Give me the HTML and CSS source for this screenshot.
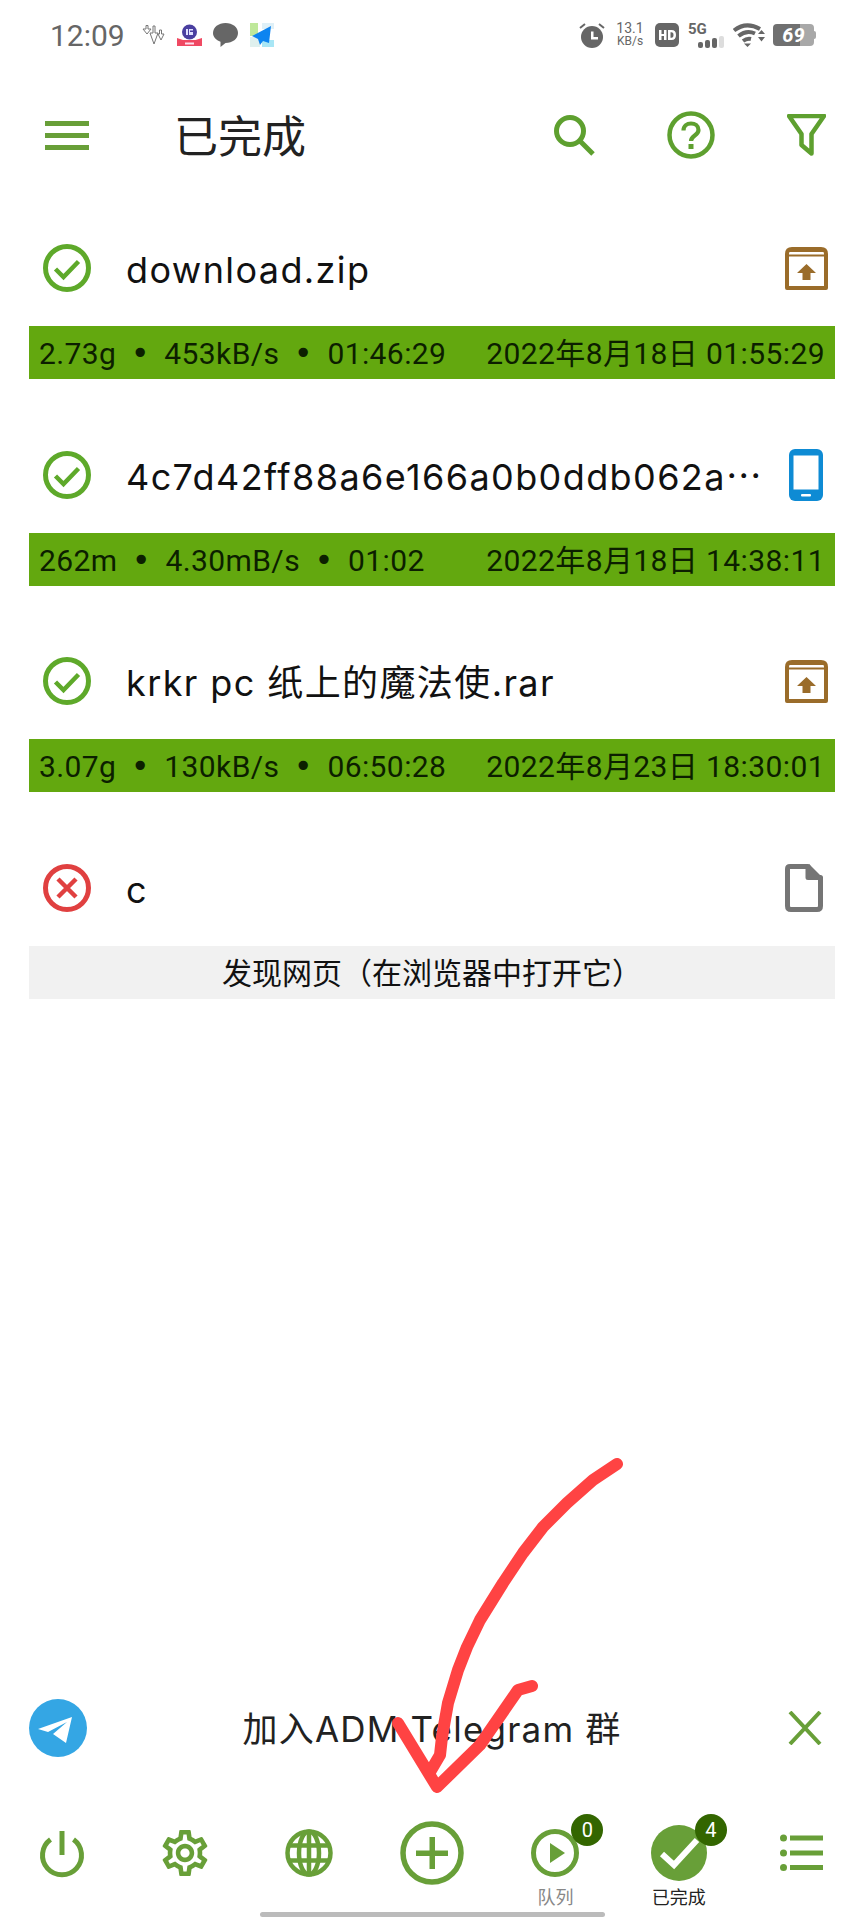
FILE: index.html
```html
<!DOCTYPE html>
<html lang="zh">
<head>
<meta charset="utf-8">
<title>已完成</title>
<link rel="stylesheet" href="styles.css">
</head>
<body>
<svg class="defs" width="0" height="0" aria-hidden="true">
  <defs>
    <symbol id="ok" viewBox="0 0 48 48">
      <circle cx="24" cy="24" r="21.5" fill="none" stroke="#5ea92a" stroke-width="5"/>
      <path d="M12.5 25l8 8 15-15.5" fill="none" stroke="#5ea92a" stroke-width="4.5"/>
    </symbol>
    <symbol id="fail" viewBox="0 0 48 48">
      <circle cx="24" cy="24" r="21.5" fill="none" stroke="#e04040" stroke-width="5"/>
      <path d="M15 15l18 18M33 15L15 33" fill="none" stroke="#e04040" stroke-width="4.5"/>
    </symbol>
    <symbol id="archive" viewBox="0 0 43 43">
      <path d="M7 2h29q5 0 5 5v34H2V7Q2 2 7 2z" fill="none" stroke="#9a6c2a" stroke-width="4" stroke-linejoin="round"/>
      <path d="M2 2h39v3H2zM2 7.500h39v2H2z" fill="#9a6c2a"/>
      <path d="M21.500 17l9.500 9h-5.500v7h-8v-7H12z" fill="#9a6c2a"/>
    </symbol>
    <symbol id="phone" viewBox="0 0 34 52">
      <rect width="34" height="52" rx="6" fill="#0e8bd4"/>
      <rect x="4.500" y="6.500" width="25" height="34" fill="#fff"/>
      <rect x="12" y="45" width="10" height="2.500" rx="1" fill="#fff"/>
    </symbol>
    <symbol id="file" viewBox="0 0 38 48">
      <path d="M5 2.500h18v11h12.500V42q0 3.500-3.500 3.500H6Q2.500 45.500 2.500 42V5Q2.500 2.500 5 2.500z" fill="none" stroke="#757575" stroke-width="5" stroke-linejoin="round"/>
      <path d="M24 0l14 14H24z" fill="#757575"/>
    </symbol>
  </defs>
</svg>

<div class="page">
  <div class="status">
    <span class="time">12:09</span>
    <svg class="st st-arrows" viewBox="0 0 23 20" aria-hidden="true"><path d="M1 4h3V0.500h2V4h3L5 9zM8 8h3V1h2v7h3l-4 11zM16 9h1.500V5h2v4H22l-3 6z" fill="#fff" stroke="#777" stroke-width="1"/></svg>
    <svg class="st st-app" viewBox="0 0 25 22" aria-hidden="true"><path d="M0 14l12 4 13-4v8H0z" fill="#f04a63"/><rect x="2" y="16" width="21" height="6" rx="1" fill="#ef4761"/><circle cx="12.500" cy="8" r="7.500" fill="#4a3fa0"/><rect x="8" y="18.500" width="9" height="2" fill="#fde"/><path d="M9 5h2v6H9zM12 5h4v1.500h-3V8h3v3h-4z" fill="#dfe0ff"/></svg>
    <svg class="st st-chat" viewBox="0 0 25 24" aria-hidden="true"><path d="M12.500 0C19.500 0 25 4.300 25 10s-5.500 10-12.500 10l-5 4 0-5.200C3 17 0 13.800 0 10 0 4.300 5.500 0 12.500 0z" fill="#666"/></svg>
    <svg class="st st-plane" viewBox="0 0 24 24" aria-hidden="true"><rect width="8" height="13" fill="#bfe89a"/><rect x="12" y="0" width="12" height="6" fill="#dff0f7"/><rect y="14" width="10" height="10" fill="#dff0ee"/><rect x="12" y="17" width="12" height="7" fill="#a8e6f5"/><path d="M21 3L2 13l6 3 2 6 3-4 6 2z" fill="#0d84f0"/></svg>
    <span class="status-gap"></span>
    <svg class="st st-alarm" viewBox="0 0 26 25" aria-hidden="true"><circle cx="13" cy="14" r="11" fill="#666"/><path d="M12 8.500h2.500V14H19v2.500h-7z" fill="#fff"/><path d="M1 5l5-4M25 5l-5-4" stroke="#666" stroke-width="2"/></svg>
    <span class="speed"><span>13.1</span><span class="speed-unit">KB/s</span></span>
    <svg class="st st-hd" viewBox="0 0 24 24" aria-hidden="true"><rect width="24" height="24" rx="5" fill="#666"/><path d="M4 7h2.500v4H9V7h2.500v10H9v-4H6.500v4H4zM13 7h3.500q4.500 0 4.500 5t-4.500 5H13zm2.500 2.200v5.600h1q2 0 2-2.800t-2-2.800z" fill="#fff"/></svg>
    <span class="net">
      <span class="net-label">5G</span>
      <span class="net-bars"><i class="bar-a"></i><i class="bar-b"></i><i class="bar-c"></i><i class="bar-d"></i></span>
    </span>
    <svg class="st st-wifi" viewBox="0 0 32 24" aria-hidden="true"><path d="M1 7.500Q13-2 27 6" fill="none" stroke="#666" stroke-width="4"/><path d="M5.500 13q8-6.500 16.500-2.500" fill="none" stroke="#666" stroke-width="4"/><path d="M10 18q4-3 8-2" fill="none" stroke="#666" stroke-width="4"/><path d="M11 20.500h7l-3.500 3.500zM25 11l3.500-4 3.500 4zM25 14h7l-3.500 4.500z" fill="#666"/></svg>
    <span class="battery"><span class="battery-fill">69</span><span class="battery-tip"></span></span>
  </div>

  <header class="toolbar">
    <div class="menu"><i></i><i></i><i></i></div>
    <h1 class="title">已完成</h1>
    <span class="toolbar-gap"></span>
    <svg class="tb tb-search" viewBox="0 0 41 41" aria-hidden="true"><circle cx="16" cy="16" r="13.500" fill="none" stroke="#5ea02f" stroke-width="5"/><path d="M26 26l13 13" stroke="#5ea02f" stroke-width="5"/></svg>
    <svg class="tb tb-help" viewBox="0 0 48 48" aria-hidden="true"><circle cx="24" cy="24" r="21.500" fill="none" stroke="#5ea02f" stroke-width="4.500"/><path d="M16.500 19.500c0-4.500 3.500-7 7.500-7s7.500 2.500 7.500 6.500c0 5.500-7.500 5.500-7.500 11" fill="none" stroke="#5ea02f" stroke-width="4.200"/><rect x="21.500" y="33" width="5" height="5" fill="#5ea02f"/></svg>
    <svg class="tb tb-filter" viewBox="0 0 39 42" aria-hidden="true"><path d="M2 2h35L24.500 20v19.500L14.500 31V20z" fill="none" stroke="#5ea02f" stroke-width="4.500" stroke-linejoin="round"/></svg>
  </header>

  <main class="list">
    <article class="item">
      <div class="row">
        <svg class="state"><use href="#ok"/></svg>
        <div class="name">download.zip</div>
        <svg class="kind kind-archive"><use href="#archive"/></svg>
      </div>
      <div class="bar"><span class="stats">2.73g <b class="dot">•</b> 453kB/s <b class="dot">•</b> 01:46:29</span><span class="when">2022年8月18日 01:55:29</span></div>
    </article>
    <article class="item">
      <div class="row">
        <svg class="state"><use href="#ok"/></svg>
        <div class="name">4c7d42ff88a6e166a0b0ddb062a⋯</div>
        <svg class="kind kind-phone"><use href="#phone"/></svg>
      </div>
      <div class="bar"><span class="stats">262m <b class="dot">•</b> 4.30mB/s <b class="dot">•</b> 01:02</span><span class="when">2022年8月18日 14:38:11</span></div>
    </article>
    <article class="item">
      <div class="row">
        <svg class="state"><use href="#ok"/></svg>
        <div class="name">krkr pc 纸上的魔法使.rar</div>
        <svg class="kind kind-archive"><use href="#archive"/></svg>
      </div>
      <div class="bar"><span class="stats">3.07g <b class="dot">•</b> 130kB/s <b class="dot">•</b> 06:50:28</span><span class="when">2022年8月23日 18:30:01</span></div>
    </article>
    <article class="item">
      <div class="row">
        <svg class="state"><use href="#fail"/></svg>
        <div class="name">c</div>
        <svg class="kind kind-file"><use href="#file"/></svg>
      </div>
      <div class="bar bar-info">发现网页（在浏览器中打开它）</div>
    </article>
  </main>

  <div class="bottom">
    <div class="promo">
      <svg class="tg" viewBox="0 0 58 58" aria-hidden="true"><circle cx="29" cy="29" r="29" fill="#34a6e4"/><path d="M9 30L43 18L37 44L24 35L38 23L19 33z" fill="#fff"/></svg>
      <span class="promo-text">加入ADM Telegram 群</span>
      <svg class="close" viewBox="0 0 34 34" aria-hidden="true"><path d="M2 1l30 32M32 1L2 33" stroke="#689f38" stroke-width="4"/></svg>
    </div>
    <nav class="nav">
      <div class="nav-item">
        <div class="nav-icon"><svg viewBox="0 0 64 64" aria-hidden="true"><path d="M20.500 18.500a19.500 19.500 0 1 0 23 0" fill="none" stroke="#689f38" stroke-width="5"/><path d="M32 10v24" stroke="#689f38" stroke-width="5"/></svg></div>
      </div>
      <div class="nav-item">
        <div class="nav-icon"><svg viewBox="-1.900 -1.900 27.800 27.800" aria-hidden="true"><path fill="#689f38" d="M19.430 12.980c.04-.32.07-.64.07-.98 0-.34-.03-.66-.07-.98l2.110-1.650c.19-.15.24-.42.12-.64l-2-3.460c-.09-.16-.26-.25-.44-.25-.06 0-.12.01-.17.03l-2.490 1c-.52-.4-1.080-.73-1.690-.98l-.38-2.650C14.460 2.180 14.250 2 14 2h-4c-.25 0-.46.18-.49.42l-.38 2.650c-.61.25-1.170.59-1.690.98l-2.490-1c-.06-.02-.12-.03-.18-.03-.17 0-.34.09-.43.25l-2 3.460c-.13.22-.07.49.12.64l2.110 1.650c-.04.32-.07.65-.07.98 0 .33.03.66.07.98l-2.110 1.650c-.19.15-.24.42-.12.64l2 3.460c.09.16.26.25.44.25.06 0 .12-.01.17-.03l2.490-1c.52.4 1.080.73 1.690.98l.38 2.650c.03.24.24.42.49.42h4c.25 0 .46-.18.49-.42l.38-2.650c.61-.25 1.170-.59 1.690-.98l2.490 1c.06.02.12.03.18.03.17 0 .34-.09.43-.25l2-3.460c.12-.22.07-.49-.12-.64l-2.110-1.650zm-1.980-1.710c.04.31.05.52.05.73 0 .21-.02.43-.05.73l-.14 1.130.89.7 1.080.84-.7 1.210-1.270-.51-1.040-.42-.9.68c-.43.32-.84.56-1.250.73l-1.060.43-.16 1.130-.2 1.350h-1.400l-.19-1.350-.16-1.130-1.060-.43c-.43-.18-.83-.41-1.230-.71l-.91-.7-1.060.43-1.270.51-.7-1.210 1.080-.84.89-.7-.14-1.130c-.03-.31-.05-.54-.05-.74s.02-.43.05-.73l.14-1.130-.89-.7-1.080-.84.7-1.210 1.270.51 1.040.42.9-.68c.43-.32.84-.56 1.250-.73l1.060-.43.16-1.130.2-1.350h1.390l.19 1.350.16 1.130 1.060.43c.43.18.83.41 1.230.71l.91.7 1.060-.43 1.270-.51.7 1.210-1.070.85-.89.7.14 1.130zM12 8c-2.210 0-4 1.790-4 4s1.790 4 4 4 4-1.790 4-4-1.790-4-4-4zm0 6c-1.100 0-2-.9-2-2s.9-2 2-2 2 .9 2 2-.9 2-2 2z"/></svg></div>
      </div>
      <div class="nav-item">
        <div class="nav-icon"><svg viewBox="0 0 64 64" aria-hidden="true"><g fill="none" stroke="#689f38" stroke-width="4.500"><circle cx="32" cy="32" r="21.500"/><ellipse cx="32" cy="32" rx="10" ry="21.500"/><path d="M11 24.500h42M11 39.500h42M32 10v44"/></g></svg></div>
      </div>
      <div class="nav-item">
        <div class="nav-icon"><svg viewBox="0 0 64 64" aria-hidden="true"><circle cx="32" cy="32" r="29" fill="none" stroke="#689f38" stroke-width="5.500"/><path d="M16 29.500h32v5.500H16zM29.500 16h5.500v32h-5.500z" fill="#689f38"/></svg></div>
      </div>
      <div class="nav-item">
        <div class="nav-icon"><svg viewBox="0 0 64 64" aria-hidden="true"><circle cx="32" cy="32" r="21.500" fill="none" stroke="#689f38" stroke-width="5"/><path d="M27 22l15 10-15 10z" fill="#689f38"/></svg><span class="badge">0</span></div>
        <span class="nav-label">队列</span>
      </div>
      <div class="nav-item">
        <div class="nav-icon"><svg viewBox="0 0 64 64" aria-hidden="true"><circle cx="32" cy="32" r="28" fill="#689f38"/><path d="M15 33l12 11 23-25" fill="none" stroke="#fff" stroke-width="6"/></svg><span class="badge">4</span></div>
        <span class="nav-label nav-label-active">已完成</span>
      </div>
      <div class="nav-item">
        <div class="nav-icon"><svg viewBox="0 0 64 64" aria-hidden="true"><g fill="#689f38"><circle cx="13.500" cy="17" r="3.500"/><circle cx="13.500" cy="32" r="3.500"/><circle cx="13.500" cy="46.500" r="3.500"/><path d="M20 14.500h33v5H20zM20 29.500h33v5H20zM20 44h33v5H20z"/></g></svg></div>
      </div>
    </nav>
    <div class="home"></div>
  </div>

  <svg class="scribble" viewBox="0 0 864 1920" aria-hidden="true">
    <path d="M617 1464L593 1480L567 1503L543 1527L523 1553L503 1583L480 1620L467 1647L458 1670L448 1703L442 1737L440 1755L430 1772M398 1723L437 1787L480 1745L518 1690L532 1686" fill="none" stroke="#ff4343" stroke-width="12" stroke-linecap="round" stroke-linejoin="round"/>
  </svg>
</div>
</body>
</html>
```
FILE: styles.css
```css
* { box-sizing: border-box; }
html, body { margin: 0; padding: 0; background: #fff; }
body { font-family: Roboto, "Noto Sans CJK SC", sans-serif; color: #111; }
.defs { position: absolute; }
.page { position: relative; width: 864px; height: 1920px; display: flex; flex-direction: column; overflow: hidden; }

.status { height: 70px; display: flex; align-items: center; padding: 0 48px 0 50px; color: #666; }
.time { font-size: 30px; width: 92px; }
.st { display: block; flex: none; }
.st-arrows { width: 23px; height: 20px; }
.st-app { width: 25px; height: 22px; margin-left: 12px; }
.st-chat { width: 25px; height: 24px; margin-left: 11px; }
.st-plane { width: 24px; height: 24px; margin-left: 12px; }
.status-gap { flex: 1; }
.st-alarm { width: 26px; height: 25px; }
.speed { display: flex; flex-direction: column; width: 28px; margin-left: 11px; font-size: 14px; line-height: 13px; align-items: center; white-space: nowrap; }
.speed-unit { font-size: 12px; }
.st-hd { width: 24px; height: 24px; margin-left: 11px; }
.net { position: relative; width: 36px; height: 25px; margin-left: 9px; flex: none; }
.net-label { position: absolute; left: 0; top: -3px; font-size: 15px; font-weight: 700; line-height: 18px; color: #666; }
.net-bars { position: absolute; right: 0; bottom: 0; display: flex; align-items: flex-end; gap: 2px; }
.net-bars i { display: block; width: 5px; background: #666; border-radius: 2px; }
.bar-a { height: 6px; }
.bar-b { height: 8px; }
.bar-c { height: 10px; }
.net-bars .bar-d { height: 12px; background: #ddd; }
.st-wifi { width: 32px; height: 24px; margin-left: 9px; }
.battery { display: flex; align-items: center; margin-left: 8px; flex: none; }
.battery-fill { width: 41px; height: 22px; border-radius: 4px; color: #fff; font-size: 20px; font-weight: 700; font-style: italic; line-height: 22px; text-align: center; background: linear-gradient(90deg, #707070 0 66%, #a8a8a8 66%); }
.battery-tip { width: 2px; height: 8px; background: #a8a8a8; border-radius: 0 2px 2px 0; }

.toolbar { height: 130px; display: flex; align-items: center; padding: 0 38px 0 45px; }
.menu { width: 44px; display: flex; flex-direction: column; gap: 7px; }
.menu i { display: block; height: 5px; background: #689f38; }
.title { margin: 5px 0 0 85px; font-size: 44px; font-weight: 400; color: #222; line-height: 1; }
.toolbar-gap { flex: 1; }
.tb { display: block; flex: none; }
.tb-search { width: 41px; height: 41px; }
.tb-help { width: 48px; height: 48px; margin-left: 72px; }
.tb-filter { width: 39px; height: 42px; margin-left: 72px; }

.list { padding: 10px 29px 0; display: flex; flex-direction: column; gap: 37.670px; }
.item { display: flex; flex-direction: column; }
.row { height: 116px; display: flex; align-items: center; padding: 0 7px 0 14px; }
.state { width: 48px; height: 48px; flex: none; }
.name { flex: 1; margin: 4px 0 0 35px; font-family: Inter, "Noto Sans CJK SC", sans-serif; font-size: 36px; line-height: 46px; letter-spacing: 1.400px; color: #111; white-space: nowrap; overflow: hidden; }
.kind { flex: none; }
.kind-archive { width: 43px; height: 43px; }
.kind-phone { width: 34px; height: 52px; margin-right: 5px; }
.kind-file { width: 38px; height: 48px; margin-right: 5px; }
.bar { height: 53px; display: flex; align-items: center; justify-content: space-between; padding: 3px 10px 0; background: #63a80f; color: #0c1f00; font-size: 30px; line-height: 40px; white-space: nowrap; }
.stats { word-spacing: 6.500px; letter-spacing: .4px; }
.when { letter-spacing: .4px; }
.dot { font-family: "DejaVu Sans", sans-serif; font-weight: 400; font-size: 32px; line-height: 1; }
.bar-info { justify-content: center; background: #f1f1f1; color: #111; }

.bottom { margin-top: auto; display: flex; flex-direction: column; }
.promo { position: relative; height: 64px; display: flex; align-items: center; padding: 0 42px 0 29px; }
.tg { width: 58px; height: 58px; display: block; flex: none; }
.promo-text { flex: 1; margin: 2px 11px 0 0; font-family: Inter, "Noto Sans CJK SC", sans-serif; font-size: 35px; line-height: 44px; letter-spacing: 1.200px; color: #222; text-align: center; white-space: nowrap; }
.close { width: 34px; height: 34px; display: block; flex: none; }
.nav { margin-top: 61px; height: 89px; display: grid; grid-template-columns: repeat(7, 1fr); }
.nav-item { display: flex; flex-direction: column; align-items: center; }
.nav-icon { position: relative; width: 64px; height: 64px; flex: none; }
.nav-icon svg { display: block; width: 64px; height: 64px; }
.badge { position: absolute; left: 48px; top: -7px; width: 32px; height: 32px; border-radius: 50%; background: #336600; color: #fff; font-size: 20px; line-height: 32px; text-align: center; }
.nav-label { margin-top: 1px; font-size: 18px; line-height: 24px; color: #888; white-space: nowrap; }
.nav-label-active { color: #222; }
.home { width: 345px; height: 5px; margin: 2px auto 3px; border-radius: 3px; background: #bbb; }

.scribble { position: absolute; left: 0; top: 0; width: 864px; height: 1920px; pointer-events: none; }
```
